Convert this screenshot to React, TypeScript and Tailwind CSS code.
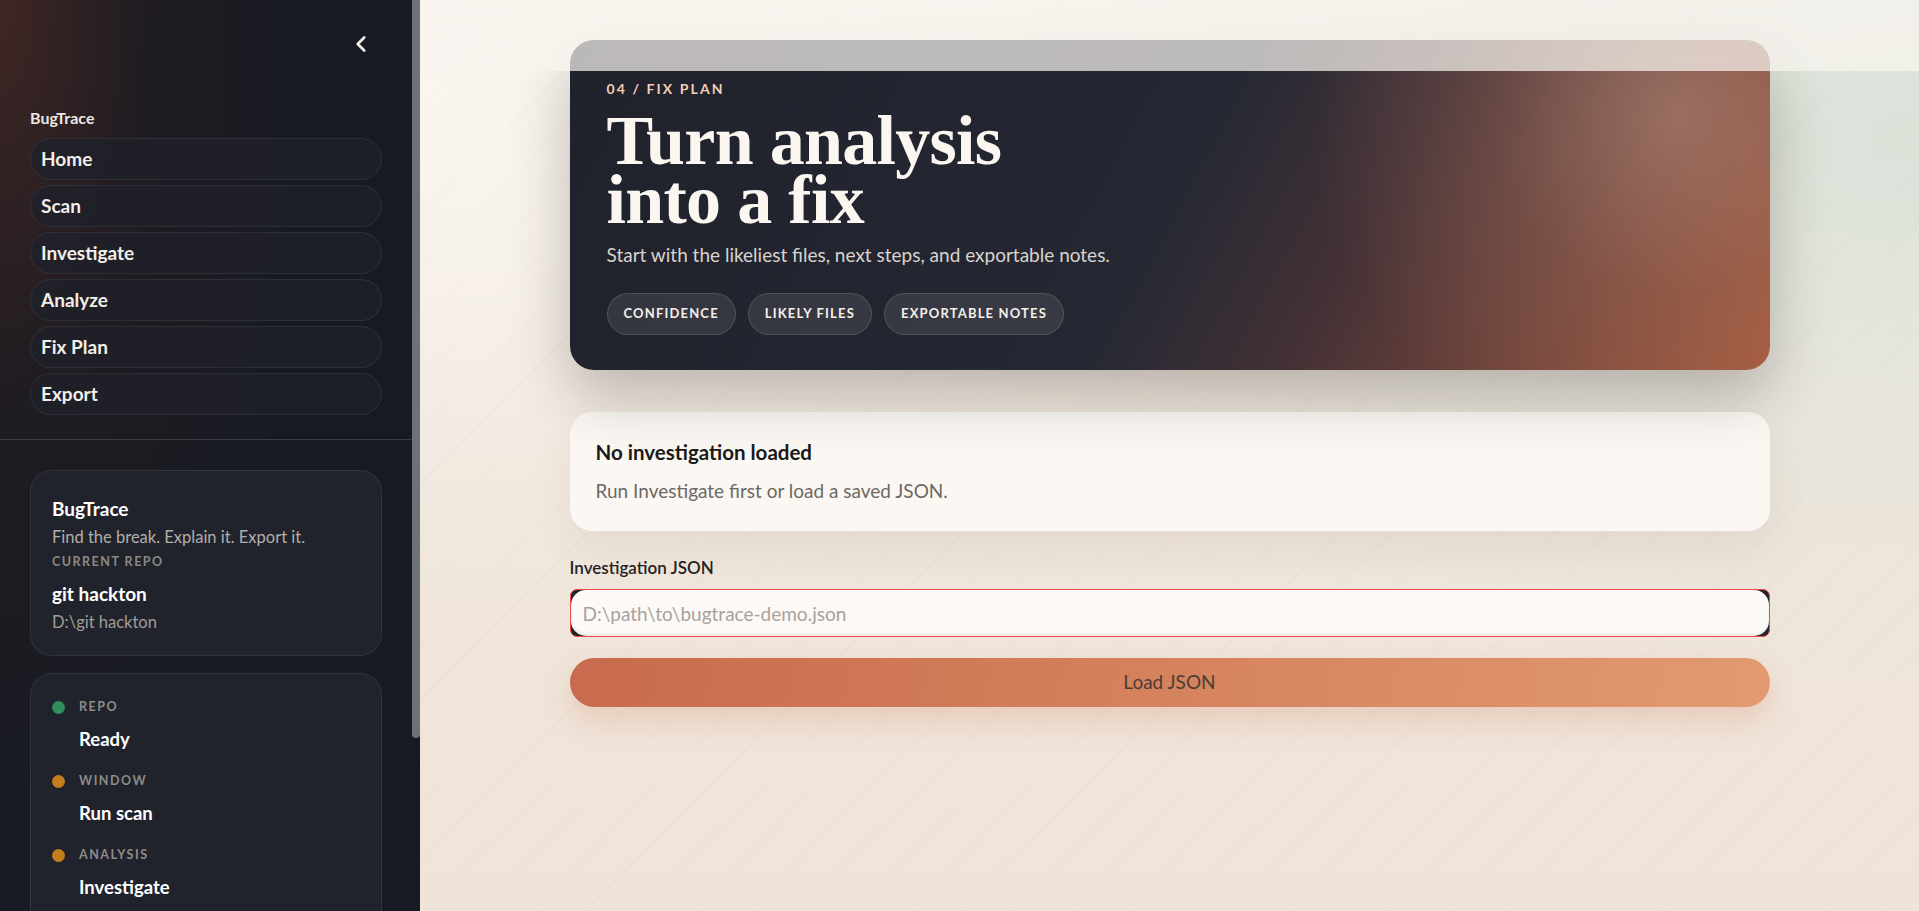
import React from "react";
import { ChevronLeft } from "lucide-react";

const navItems = ["Home", "Scan", "Investigate", "Analyze", "Fix Plan", "Export"];

const statusRows = [
  { label: "REPO", value: "Ready", dot: "bg-[#2f8f5b]" },
  { label: "WINDOW", value: "Run scan", dot: "bg-[#c27d1f]" },
  { label: "ANALYSIS", value: "Investigate", dot: "bg-[#c27d1f]" },
  { label: "EXPORT", value: "Fix plan", dot: "bg-[#c27d1f]" },
];

function Sidebar() {
  return (
    <aside className="relative w-[420px] shrink-0 h-full overflow-hidden bg-[#171a22]">
      <div className="w-[412px] bg-[radial-gradient(ellipse_at_0%_0%,rgba(70,40,36,0.85)_0%,rgba(40,30,34,0.5)_25%,transparent_55%)]">
        <div className="flex justify-end pt-[30px] pr-[37px] h-[108px]">
          <button className="h-7 w-7 flex items-center justify-center text-[#f1ece6]">
            <ChevronLeft size={26} strokeWidth={2.5} />
          </button>
        </div>

        <div className="px-[30px]">
          <div className="text-[16px] font-bold text-[#ece7e1] leading-[20px] mb-[10px]">BugTrace</div>
          <nav className="flex flex-col gap-[5px]">
            {navItems.map((item) => (
              <button
                key={item}
                className="h-[42px] w-full rounded-full border border-white/[0.07] bg-[#1f212a]/80 px-[10px] text-left text-[19px] font-bold text-[#f3eee8]"
              >
                {item}
              </button>
            ))}
          </nav>
        </div>

        <div className="mt-[24px] border-t border-white/15" />

        <div className="px-[30px] pt-[30px] flex flex-col gap-[17px]">
          <div className="rounded-[22px] border border-white/[0.08] bg-[#20232c] px-[21px] pt-[26px] pb-[21px]">
            <div className="text-[19px] font-bold text-white leading-[24px]">BugTrace</div>
            <div className="text-[16.5px] text-[#b3aea9] leading-[24px] mt-[4px]">Find the break. Explain it. Export it.</div>
            <div className="text-[12.5px] font-bold tracking-[0.12em] text-[#8c8884] leading-[18px] mt-[4px]">CURRENT REPO</div>
            <div className="text-[19px] font-bold text-white leading-[24px] mt-[11px]">git hackton</div>
            <div className="text-[16.5px] text-[#a19d98] leading-[24px] mt-[4px]">D:\git hackton</div>
          </div>

          <div className="rounded-[22px] border border-white/[0.08] bg-[#20232c] px-[21px] pt-[24px] pb-[28px] flex flex-col gap-[21px]">
            {statusRows.map((row) => (
              <div key={row.label}>
                <div className="flex items-center gap-[14px]">
                  <span className={`h-[13px] w-[13px] rounded-full ${row.dot}`} />
                  <span className="text-[12.5px] font-bold tracking-[0.12em] text-[#8f8b87] leading-[18px]">{row.label}</span>
                </div>
                <div className="pl-[27px] mt-[11px] text-[18.5px] font-bold text-white leading-[24px]">{row.value}</div>
              </div>
            ))}
          </div>
        </div>
        <div className="h-[120px]" />
      </div>
      {/* scroll thumb */}
      <div className="absolute right-0 top-0 w-[8px] h-[738px] rounded-b-full bg-[#6e7178]" />
    </aside>
  );
}

function Hero() {
  return (
    <section className="relative overflow-hidden rounded-[24px] h-[330px] bg-[linear-gradient(118deg,#1f222b_0%,#252833_50%,#443136_65%,#72443a_81%,#a95b3e_100%)] shadow-[0_26px_60px_rgba(45,35,28,0.28)]">
      <div className="absolute inset-0 bg-[radial-gradient(circle_at_92%_22%,rgba(180,142,128,0.55)_0%,rgba(160,120,105,0.25)_16%,transparent_32%)]" />
      <div className="relative px-[37px] pt-[40px]">
        <div className="text-[14px] font-bold tracking-[0.15em] text-[#f2cdb9] leading-[18px]">04 / FIX PLAN</div>
        <h1 className="mt-[13px] font-['Liberation_Serif',serif] font-bold text-[70px] leading-[59px] tracking-[-0.01em] text-[#fbf6f0]">
          Turn analysis
          <br />
          into a fix
        </h1>
        <p className="mt-[14px] text-[19px] text-[#d9d3cd] leading-[24px]">
          Start with the likeliest files, next steps, and exportable notes.
        </p>
        <div className="mt-[26px] flex gap-[12px]">
          {["CONFIDENCE", "LIKELY FILES", "EXPORTABLE NOTES"].map((p) => (
            <span
              key={p}
              className="h-[42px] px-[16px] flex items-center rounded-full border border-white/[0.13] bg-white/[0.09] text-[13px] font-bold tracking-[0.09em] text-[#f5efe9]"
            >
              {p}
            </span>
          ))}
        </div>
      </div>
    </section>
  );
}

export default function App() {
  return (
    <div className="flex h-screen w-full overflow-hidden font-['Lato',sans-serif]">
      <Sidebar />
      <main className="relative flex-1 h-full overflow-hidden bg-[#f3ebe2]">
        <div className="absolute inset-0 bg-[linear-gradient(180deg,#f6f0ea_0%,#efe6dc_50%,#f0e4d8_100%)]" />
        <div className="absolute inset-0 bg-[radial-gradient(ellipse_at_100%_15%,rgba(215,225,215,0.9)_0%,rgba(225,228,220,0.5)_25%,transparent_50%)]" />
        <div className="absolute inset-0 bg-[radial-gradient(ellipse_at_0%_10%,rgba(250,246,240,0.9)_0%,transparent_45%)]" />
        <div className="absolute inset-0 bg-[repeating-linear-gradient(135deg,rgba(110,90,70,0.03)_0px,rgba(110,90,70,0.03)_1px,transparent_1px,transparent_38px)]" />

        <div className="absolute inset-x-0 top-0 h-[71px] z-10 bg-[#f8f4ee]/[0.72]" />

        <div className="relative mx-auto w-[1200px] pt-[40px]">
          <Hero />

          <div className="mt-[42px] rounded-[22px] bg-[#fbf8f4] h-[119px] px-[26px] pt-[27px] shadow-[0_18px_40px_rgba(90,60,35,0.08)]">
            <div className="text-[20.5px] font-bold text-[#1c1a19] leading-[26px]">No investigation loaded</div>
            <div className="mt-[14px] text-[19px] text-[#6d6863] leading-[24px]">Run Investigate first or load a saved JSON.</div>
          </div>

          <label className="block mt-[26px] text-[17px] font-semibold text-[#26221f] leading-[22px]">Investigation JSON</label>
          <div className="mt-[10px] h-[48px] rounded-[7px] border border-[#ec4a4d] bg-[#22222a] p-0">
            <input
              placeholder="D:\path\to\bugtrace-demo.json"
              className="h-full w-full rounded-[15px] bg-[#fdf9f6] px-[12px] text-[19px] text-[#2b2724] placeholder:text-[#a8a29d] outline-none shadow-[inset_0_-2px_3px_rgba(0,0,0,0.08)]"
            />
          </div>

          <button className="mt-[21px] h-[49px] w-full rounded-full bg-[linear-gradient(100deg,#c86a4d_0%,#d6855f_55%,#e39a70_100%)] text-[19px] text-[#4b3d36] shadow-[0_14px_30px_rgba(205,110,75,0.22)]">
            Load JSON
          </button>
        </div>
      </main>
    </div>
  );
}
